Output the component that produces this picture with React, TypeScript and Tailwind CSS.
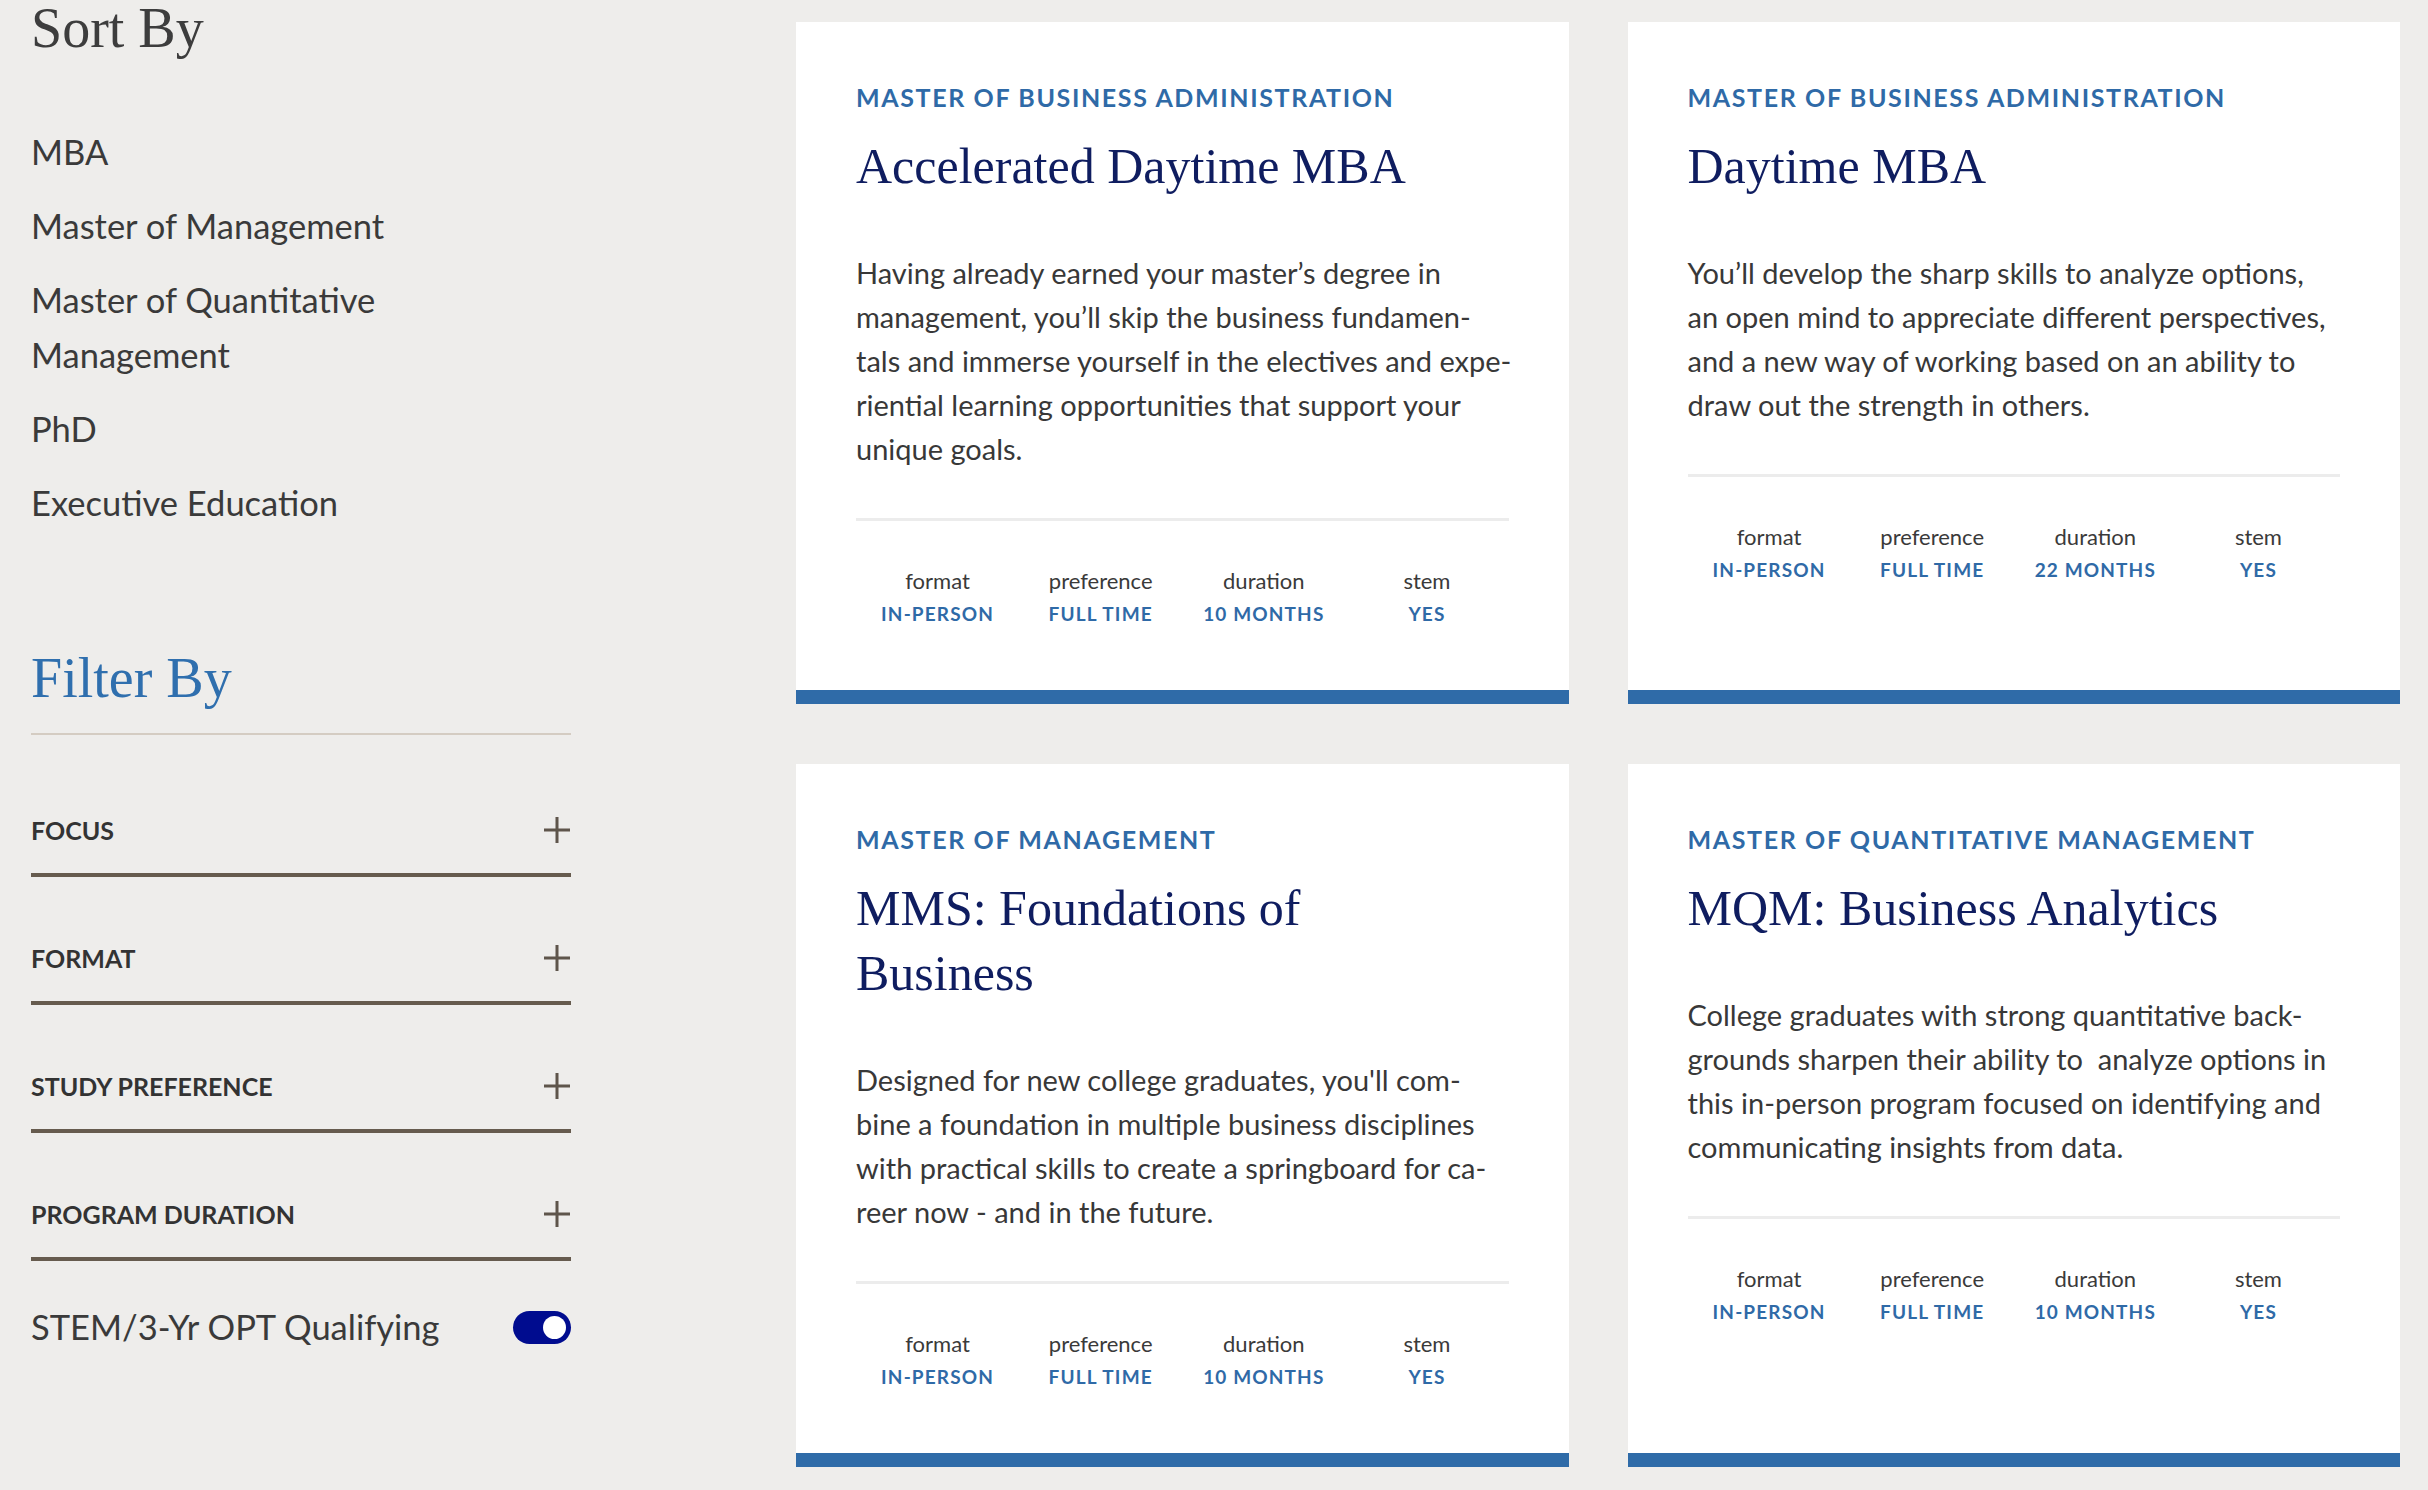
import React from "react";

type Program = {
  category: string;
  title: string[];
  body: string[];
  format: string;
  preference: string;
  duration: string;
  stem: string;
};

const programs: Program[] = [
  {
    category: "Master of Business Administration",
    title: ["Accelerated Daytime MBA"],
    body: [
      "Having already earned your master’s degree in",
      "management, you’ll skip the business fundamen-",
      "tals and immerse yourself in the electives and expe-",
      "riential learning opportunities that support your",
      "unique goals.",
    ],
    format: "In-Person",
    preference: "Full Time",
    duration: "10 Months",
    stem: "Yes",
  },
  {
    category: "Master of Business Administration",
    title: ["Daytime MBA"],
    body: [
      "You’ll develop the sharp skills to analyze options,",
      "an open mind to appreciate different perspectives,",
      "and a new way of working based on an ability to",
      "draw out the strength in others.",
    ],
    format: "In-Person",
    preference: "Full Time",
    duration: "22 Months",
    stem: "Yes",
  },
  {
    category: "Master of Management",
    title: ["MMS: Foundations of", "Business"],
    body: [
      "Designed for new college graduates, you'll com-",
      "bine a foundation in multiple business disciplines",
      "with practical skills to create a springboard for ca-",
      "reer now - and in the future.",
    ],
    format: "In-Person",
    preference: "Full Time",
    duration: "10 Months",
    stem: "Yes",
  },
  {
    category: "Master of Quantitative Management",
    title: ["MQM: Business Analytics"],
    body: [
      "College graduates with strong quantitative back-",
      "grounds sharpen their ability to  analyze options in",
      "this in-person program focused on identifying and",
      "communicating insights from data.",
    ],
    format: "In-Person",
    preference: "Full Time",
    duration: "10 Months",
    stem: "Yes",
  },
];

const sortOptions = [
  "MBA",
  "Master of Management",
  "Master of Quantitative Management",
  "PhD",
  "Executive Education",
];

const filters = ["Focus", "Format", "Study Preference", "Program Duration"];

function PlusIcon() {
  return (
    <svg width="28" height="28" viewBox="0 0 28 28" fill="none">
      <path d="M14 1v26M1 14h26" stroke="#5e554b" strokeWidth="3" />
    </svg>
  );
}

function ProgramCard({ program }: { program: Program }) {
  const meta = [
    ["format", program.format],
    ["preference", program.preference],
    ["duration", program.duration],
    ["stem", program.stem],
  ];

  return (
    <div className="flex flex-col bg-white">
      <div className="px-[60px] pt-[60px] pb-[62px]">
        <div className="text-[25px] leading-[30px] font-bold uppercase tracking-[0.065em] text-[#2f6aa7]">
          {program.category}
        </div>
        <h3 className="mt-[22px] font-['Liberation_Serif',serif] text-[50px] leading-[65px] text-[#0f1d60]">
          {program.title.map((line) => (
            <div key={line}>{line}</div>
          ))}
        </h3>
        <div className="mt-[52px] text-[29px] leading-[44px] text-[#383838]">
          {program.body.map((line) => (
            <div key={line} className="whitespace-pre">
              {line}
            </div>
          ))}
        </div>
        <div className="mt-[47px] h-[3px] bg-[#ececec]" />
        <div className="mt-[46px] grid grid-cols-4 text-center">
          {meta.map(([label, value]) => (
            <div key={label}>
              <div className="text-[22px] leading-[28px] text-[#3a3a3a]">{label}</div>
              <div className="mt-[5px] text-[19px] leading-[28px] font-bold uppercase tracking-[0.06em] text-[#2f6aa7]">
                {value}
              </div>
            </div>
          ))}
        </div>
      </div>
      <div className="mt-auto h-[14px] bg-[#2f6ba8]" />
    </div>
  );
}

export default function App() {
  return (
    <div className="flex min-h-screen bg-[#eeedeb] pl-[31px] pr-[28px] font-['Lato',sans-serif]">
      {/* SIDEBAR */}
      <aside className="w-[540px] shrink-0">
        <h2 className="font-['Liberation_Serif',serif] text-[56px] leading-none text-[#3d3d3d]">
          Sort By
        </h2>
        <ul className="mt-[68px] w-[440px]">
          {sortOptions.map((opt) => (
            <li key={opt} className="mb-[19px] text-[34.5px] leading-[55px] text-[#3a3a3a]">
              {opt}
            </li>
          ))}
        </ul>

        <h2 className="mt-[120px] font-['Liberation_Serif',serif] text-[56px] leading-none text-[#2f6fae]">
          Filter By
        </h2>
        <div className="mt-[27px] h-[2px] bg-[#d4ccc2]" />

        <div className="pt-[14px]">
          {filters.map((f) => (
            <div
              key={f}
              className="flex items-center justify-between border-b-4 border-[#665b4e] pt-[66px] pb-[28px]"
            >
              <span className="text-[25px] leading-[30px] font-bold uppercase text-[#333333]">{f}</span>
              <PlusIcon />
            </div>
          ))}
        </div>

        <div className="mt-[46px] flex h-[40px] items-center justify-between">
          <span className="text-[34.5px] leading-[40px] text-[#3a3a3a]">STEM/3-Yr OPT Qualifying</span>
          <div className="flex h-[33px] w-[58px] items-center justify-end rounded-full bg-[#000c8f] pr-[5px]">
            <div className="h-[23px] w-[23px] rounded-full bg-white" />
          </div>
        </div>
      </aside>

      {/* PROGRAM CARDS */}
      <main className="ml-[225px] grid w-[1605px] grid-cols-2 content-start gap-x-[59px] gap-y-[60px] pt-[22px]">
        {programs.map((p) => (
          <ProgramCard key={p.title.join(" ")} program={p} />
        ))}
      </main>
    </div>
  );
}
